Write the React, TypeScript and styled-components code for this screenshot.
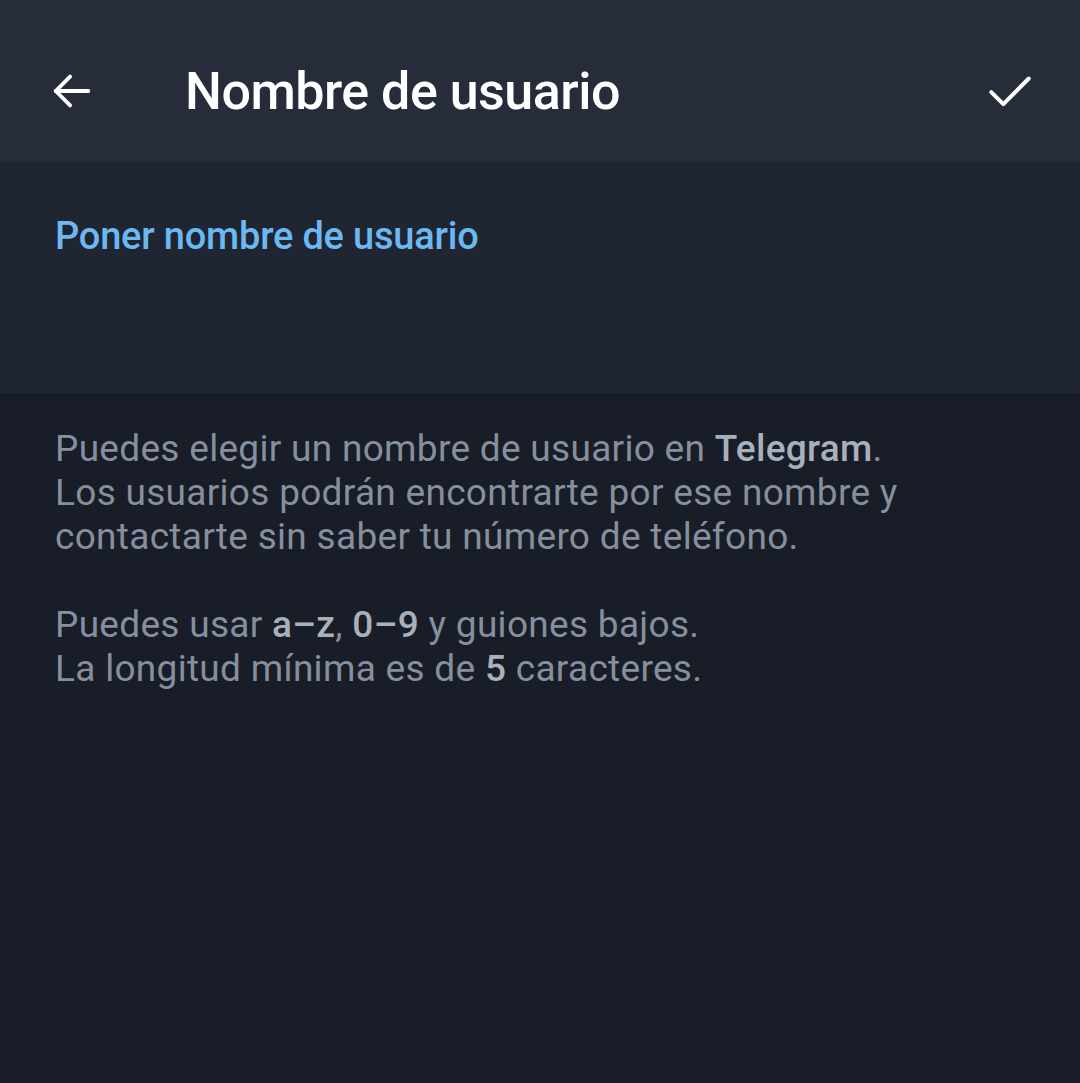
import styled, { createGlobalStyle } from 'styled-components';

const GlobalStyle = createGlobalStyle`
  html, body {
    margin: 0;
    padding: 0;
    background: #181d27;
  }
  body {
    font-family: Roboto, "Noto Sans", "Liberation Sans", sans-serif;
  }
`;

const Screen = styled.div`
  width: 1080px;
  height: 1083px;
  display: flex;
  flex-direction: column;
  background: #181d27;
  overflow: hidden;
`;

const Toolbar = styled.header`
  height: 162px;
  flex-shrink: 0;
  display: flex;
  align-items: center;
  background: #262c3a;
  padding: 20px 44px 0 46px;
  box-sizing: border-box;
`;

const IconButton = styled.button`
  width: 52px;
  height: 52px;
  padding: 0;
  border: none;
  background: transparent;
  display: flex;
  align-items: center;
  justify-content: center;
  color: #ffffff;
  cursor: pointer;
`;

const Title = styled.h1`
  flex: 1;
  margin: 0 0 0 87px;
  font-size: 52px;
  font-weight: 500;
  color: #ffffff;
  letter-spacing: -0.5px;
`;

const InputSection = styled.section`
  height: 231px;
  flex-shrink: 0;
  background: #1f2531;
  padding: 49px 55px 0;
  box-sizing: border-box;
`;

const Placeholder = styled.div`
  font-size: 38px;
  font-weight: 500;
  color: #6bb8f2;
  line-height: 50px;
  letter-spacing: -0.2px;
`;

const HelpBlock = styled.div`
  padding: 34px 55px 0;
  display: flex;
  flex-direction: column;
  gap: 44px;
`;

const HelpText = styled.p`
  margin: 0;
  font-size: 37px;
  line-height: 44px;
  color: #868f9d;
  letter-spacing: 0.3px;

  b {
    font-weight: 500;
    color: #a8b0bc;
  }
`;

const BackIcon = () => (
  <svg width="46" height="46" viewBox="0 0 24 24" fill="none" stroke="currentColor" strokeWidth="2" strokeLinecap="round" strokeLinejoin="round">
    <path d="M20.5 12H3.5" />
    <path d="M11 4.5L3.5 12l7.5 7.5" />
  </svg>
);

const CheckIcon = () => (
  <svg width="50" height="50" viewBox="0 0 24 24" fill="none" stroke="currentColor" strokeWidth="1.9" strokeLinecap="round" strokeLinejoin="round">
    <path d="M3 12.5l5.8 5.8L21 6" />
  </svg>
);

const App = () => {
  return (
    <Screen>
      <GlobalStyle />
      <Toolbar>
        <IconButton aria-label="Atrás">
          <BackIcon />
        </IconButton>
        <Title>Nombre de usuario</Title>
        <IconButton aria-label="Listo">
          <CheckIcon />
        </IconButton>
      </Toolbar>
      <InputSection>
        <Placeholder>Poner nombre de usuario</Placeholder>
      </InputSection>
      <HelpBlock>
        <HelpText>
          Puedes elegir un nombre de usuario en <b>Telegram</b>.
          <br />
          Los usuarios podrán encontrarte por ese nombre y
          <br />
          contactarte sin saber tu número de teléfono.
        </HelpText>
        <HelpText>
          Puedes usar <b>a–z</b>, <b>0–9</b> y guiones bajos.
          <br />
          La longitud mínima es de <b>5</b> caracteres.
        </HelpText>
      </HelpBlock>
    </Screen>
  );
};

export default App;
